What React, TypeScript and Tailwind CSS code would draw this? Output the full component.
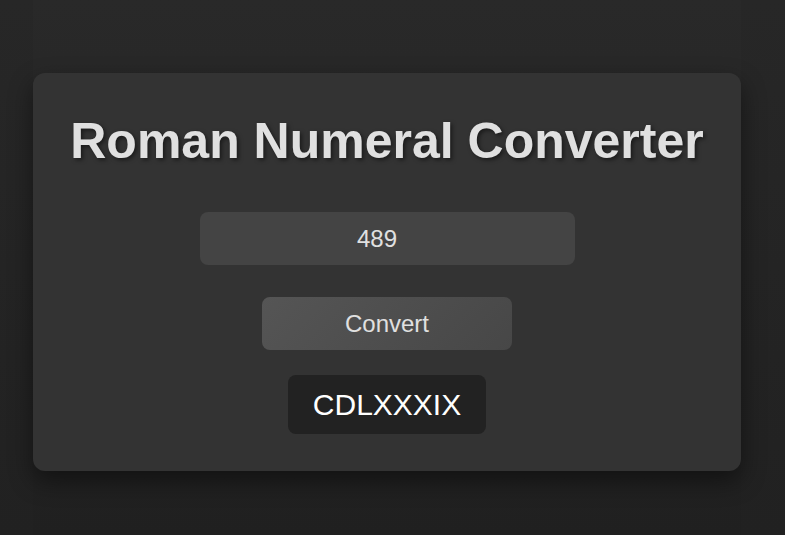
import React from "react";

export default function App() {
  return (
    <div
      className="w-[785px] h-[535px] overflow-hidden bg-[linear-gradient(180deg,#272727,#212121)]"
      style={{ fontFamily: '"Liberation Sans", Arial, sans-serif' }}
    >
      <div className="ml-[33px] w-[708px] h-[535px] pt-[73px] bg-[linear-gradient(180deg,#292929,#202020)]">
        <div className="flex h-[398px] w-[708px] flex-col items-center rounded-[12px] bg-[#333333] shadow-[0_10px_25px_rgba(0,0,0,0.45)]">
          <h1 className="mt-[39px] text-[50px] font-bold leading-[58px] text-[#e0e0e0] [text-shadow:2px_2px_4px_rgba(0,0,0,0.5)]">
            Roman Numeral Converter
          </h1>
          <input
            readOnly
            value="489"
            className="mt-[42px] h-[53px] w-[375px] rounded-[8px] bg-[#444444] pl-[12px] pr-[32px] text-center text-[24px] text-[#e0e0e0] outline-none"
          />
          <button className="mt-[32px] h-[53px] w-[250px] rounded-[8px] bg-[linear-gradient(135deg,#555555,#474747)] text-[24px] text-[#e0e0e0]">
            Convert
          </button>
          <div className="mt-[25px] flex h-[59px] w-[198px] items-center justify-center rounded-[8px] bg-[#222222] text-[30px] text-white">
            CDLXXXIX
          </div>
        </div>
      </div>
    </div>
  );
}
